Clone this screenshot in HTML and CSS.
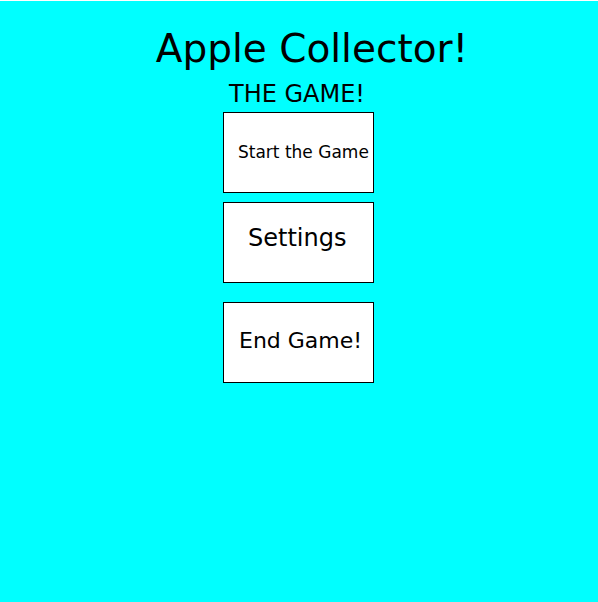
FILE: index.html
```html
<!DOCTYPE html>
<html>
<head>
<meta charset="utf-8">
<title>Apple Collector!</title>
<link rel="stylesheet" href="styles.css">
</head>
<body>
<main class="menu">
  <h1 class="title">Apple Collector!</h1>
  <h2 class="subtitle">THE GAME!</h2>
  <div class="buttons">
    <button class="btn btn-start"><span class="btn-label">Start the Game</span></button>
    <button class="btn btn-settings"><span class="btn-label">Settings</span></button>
    <button class="btn btn-end"><span class="btn-label">End Game!</span></button>
  </div>
</main>
</body>
</html>
```
FILE: styles.css
```css
html, body {
  margin: 0;
  padding: 0;
  height: 100%;
}
body {
  background: #00ffff;
  border-top: 1px solid #ffffff;
  box-sizing: border-box;
  font-family: "DejaVu Sans", sans-serif;
  color: #000;
}
.menu {
  display: flex;
  flex-direction: column;
  align-items: center;
}
.title {
  margin: 29px 0 0 26px;
  font-size: 39px;
  line-height: 38px;
  font-weight: normal;
  white-space: nowrap;
}
.subtitle {
  margin: 14px 4px 0 0;
  font-size: 24px;
  line-height: 24px;
  font-weight: normal;
  white-space: nowrap;
}
.buttons {
  display: flex;
  flex-direction: column;
  margin: 6px 1px 0 0;
}
.btn {
  box-sizing: border-box;
  width: 151px;
  height: 81px;
  background: #ffffff;
  border: 1px solid #000;
  border-radius: 0;
  margin: 0;
  font-family: "DejaVu Sans", sans-serif;
  color: #000;
  display: flex;
  align-items: flex-start;
  justify-content: flex-start;
  white-space: nowrap;
  padding-right: 0;
  padding-bottom: 0;
  overflow: visible;
}
.btn-label {
  display: block;
}
.btn-start {
  font-size: 17px;
  line-height: 17px;
  padding-top: 31px;
  padding-left: 14px;
}
.btn-settings {
  margin-top: 9px;
  font-size: 24px;
  line-height: 24px;
  padding-top: 23px;
  padding-left: 24px;
}
.btn-end {
  margin-top: 19px;
  font-size: 22px;
  line-height: 22px;
  padding-top: 27px;
  padding-left: 15px;
}
```
